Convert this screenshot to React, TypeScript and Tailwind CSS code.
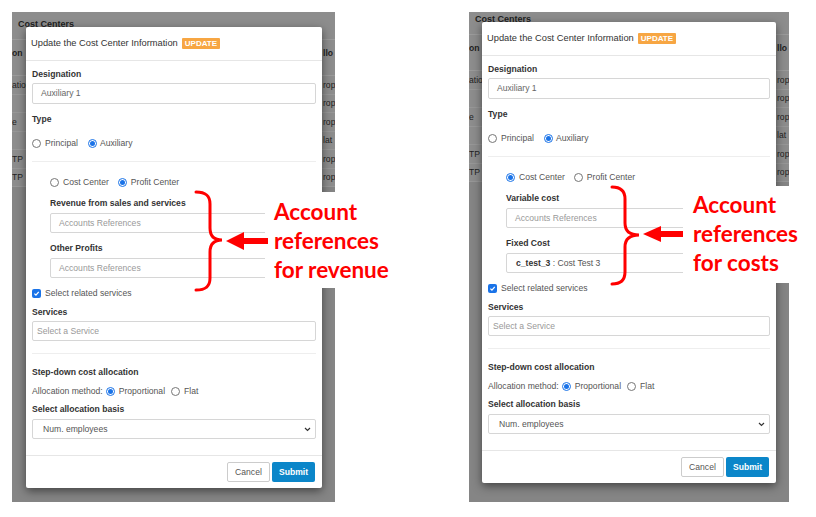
import React from "react";

function Radio({ on }: { on?: boolean }) {
  if (on) {
    return (
      <span className="w-[9px] h-[9px] shrink-0 rounded-full border border-[#1a73e8] bg-white flex items-center justify-center">
        <span className="w-[5px] h-[5px] rounded-full bg-[#1a73e8]" />
      </span>
    );
  }
  return <span className="w-[9px] h-[9px] shrink-0 rounded-full border border-[#767676] bg-white" />;
}

function Check() {
  return (
    <span className="w-[9px] h-[9px] shrink-0 rounded-[2px] bg-[#1a73e8] flex items-center justify-center">
      <svg width="7" height="7" viewBox="0 0 10 10">
        <path d="M2 5.2 L4.2 7.4 L8.2 2.8" fill="none" stroke="#fff" strokeWidth="1.8" />
      </svg>
    </span>
  );
}

function Label({ children, className = "" }: { children: React.ReactNode; className?: string }) {
  return <div className={"h-[11px] font-bold text-[#333] " + className}>{children}</div>;
}

function Input({ children, className = "" }: { children: React.ReactNode; className?: string }) {
  return (
    <div className={"border border-[#d6d6d6] rounded-[2px] flex items-center whitespace-nowrap " + className}>
      {children}
    </div>
  );
}

function Modal({ kind }: { kind: "revenue" | "cost" }) {
  const rev = kind === "revenue";
  return (
    <div className="bg-white rounded-[2px] shadow-[0_3px_10px_rgba(0,0,0,0.5)] text-[8.6px] leading-[11px] text-[#555]">
      <div className="h-[34px] border-b border-[#e6e6e6] pl-[5px] flex items-center text-[9.3px] text-[#333]">
        Update the Cost Center Information
        <span className="ml-[4px] px-[3px] h-[11px] leading-[11px] rounded-[1px] bg-[#f7a643] text-white font-bold text-[8px]">
          UPDATE
        </span>
      </div>

      <div className="px-[6px] pt-[8px] pb-[16px]">
        <Label>Designation</Label>
        <Input className="mt-[3px] h-[21px] pl-[8px] text-[#666]">Auxiliary 1</Input>

        <Label className="mt-[10px]">Type</Label>
        <div className="mt-[13px] h-[11px] flex items-center">
          <Radio />
          <span className="ml-[4px]">Principal</span>
          <span className="ml-[10px]" />
          <Radio on />
          <span className="ml-[3px]">Auxiliary</span>
        </div>

        <div className="mt-[12px] border-t border-[#eeeeee]" />

        <div className="pl-[18px]">
          <div className="mt-[15px] h-[11px] flex items-center">
            <Radio on={!rev} />
            <span className="ml-[4px]">Cost Center</span>
            <span className="ml-[9px]" />
            <Radio on={rev} />
            <span className="ml-[4px]">Profit Center</span>
          </div>

          <Label className="mt-[10px]">{rev ? "Revenue from sales and services" : "Variable cost"}</Label>
          <Input className="mt-[4px] h-[20px] pl-[8px] text-[#999]">Accounts References</Input>

          <Label className="mt-[10px]">{rev ? "Other Profits" : "Fixed Cost"}</Label>
          {rev ? (
            <Input className="mt-[4px] h-[20px] pl-[8px] text-[#999]">Accounts References</Input>
          ) : (
            <Input className="mt-[4px] h-[20px] pl-[9px] text-[#555]">
              <span className="font-bold text-[#333]">c_test_3</span>
              <span>&nbsp;: Cost Test 3</span>
            </Input>
          )}
        </div>

        <div className="mt-[10px] h-[11px] flex items-center">
          <Check />
          <span className="ml-[4px]">Select related services</span>
        </div>

        <Label className="mt-[8px]">Services</Label>
        <Input className="mt-[3px] h-[20px] pl-[4px] text-[#999]">Select a Service</Input>

        <div className="mt-[12px] border-t border-[#eeeeee]" />

        <Label className="mt-[13px]">Step-down cost allocation</Label>
        <div className="mt-[8px] h-[11px] flex items-center">
          <span>Allocation method:</span>
          <span className="ml-[3px]" />
          <Radio on />
          <span className="ml-[4px]">Proportional</span>
          <span className="ml-[6px]" />
          <Radio />
          <span className="ml-[4px]">Flat</span>
        </div>

        <Label className="mt-[7px]">Select allocation basis</Label>
        <Input className="mt-[4px] h-[20px] pl-[10px] pr-[4px] justify-between text-[#555]">
          <span>Num. employees</span>
          <svg width="7" height="5" viewBox="0 0 7 5">
            <path d="M1 1 L3.5 3.5 L6 1" fill="none" stroke="#333" strokeWidth="1.2" />
          </svg>
        </Input>
      </div>

      <div className="border-t border-[#e6e6e6] pt-[6px] pb-[6px] pr-[7px] flex justify-end gap-[2px]">
        <div className="w-[43px] h-[20px] border border-[#cccccc] rounded-[2px] flex items-center justify-center text-[#555]">
          Cancel
        </div>
        <div className="w-[43px] h-[20px] rounded-[2px] bg-[#0b86c9] flex items-center justify-center text-white font-bold">
          Submit
        </div>
      </div>
    </div>
  );
}

// only the slivers of the table that show beside the modal
const rows = [
  { l: "ation", r: "rop" },
  { l: "", r: "rop" },
  { l: "e", r: "rop" },
  { l: "", r: "lat" },
  { l: "TP", r: "rop" },
  { l: "TP", r: "rop" },
];

function Backdrop({ pad }: { pad: string }) {
  return (
    <div className={"bg-[#8d8d8d] text-[8.6px] leading-[10px] text-[#1f1f1f] " + pad}>
      <div className="pl-[6px] h-[12px] leading-[12px] font-bold text-[9px]">Cost Centers</div>
      <div className="mt-[9px] border-t border-[#9b9b9b]" />
      <div className="h-[36px] pt-[8px] flex font-bold border-b border-[#9b9b9b]">
        <div className="w-[12px] whitespace-nowrap">on</div>
        <div className="flex-1" />
        <div className="w-[12px] whitespace-nowrap">llo</div>
      </div>
      {rows.map((row, i) => (
        <div key={i} className="h-[18.5px] flex items-center border-b border-[#979797]">
          <div className="w-[13px] whitespace-nowrap">{row.l}</div>
          <div className="flex-1" />
          <div className="w-[12px] whitespace-nowrap">{row.r}</div>
        </div>
      ))}
    </div>
  );
}

export default function App() {
  return (
    <div className="relative w-[816px] h-[517px] bg-white overflow-hidden font-['Liberation_Sans',Arial,sans-serif]">
      <div className="flex pt-[12px] pl-[12px] gap-[134px]">
        <div className="relative w-[323px] h-[490px] bg-[#858585] overflow-hidden">
          <Backdrop pad="pt-[6px]" />
          <div className="absolute left-[14px] top-[15px] w-[296px]">
            <Modal kind="revenue" />
          </div>
        </div>
        <div className="relative w-[320px] h-[490px] bg-[#858585] overflow-hidden">
          <Backdrop pad="pt-[1px]" />
          <div className="absolute left-[13px] top-[10px] w-[294px]">
            <Modal kind="cost" />
          </div>
        </div>
      </div>

      {/* annotations */}
      <div className="absolute left-[265px] top-[192px] w-[140px] h-[96px] bg-white pl-[9px] pt-[5px] font-['Lato',sans-serif] font-bold text-[22.5px] leading-[29px] text-[#ff0000]">
        Account
        <br />
        references
        <br />
        for revenue
      </div>
      <div className="absolute left-[683px] top-[186px] w-[133px] h-[97px] bg-white pl-[10px] pt-[4px] font-['Lato',sans-serif] font-bold text-[22.5px] leading-[29px] text-[#ff0000]">
        Account
        <br />
        references
        <br />
        for costs
      </div>
      <svg className="absolute left-0 top-0 pointer-events-none" width="816" height="517">
        <g fill="none" stroke="#ff0000" strokeWidth="3" strokeLinecap="round">
          <path d="M196 192 C206 192 210 196 210 204 L210 228 C210 236 214 240 222 240 C214 240 210 244 210 252 L210 278 C210 286 206 290 196 290" />
          <path d="M612 187 C621 187 625 191 625 199 L625 223 C625 231 630 235 639 235 C630 235 625 239 625 247 L625 272 C625 280 621 284 612 284" />
        </g>
        <g fill="#ff0000">
          <rect x="240" y="238" width="28" height="6" />
          <polygon points="226,241 244,232 244,250" />
          <rect x="658" y="231" width="25" height="6" />
          <polygon points="643,234 661,226 661,242" />
        </g>
      </svg>
    </div>
  );
}
